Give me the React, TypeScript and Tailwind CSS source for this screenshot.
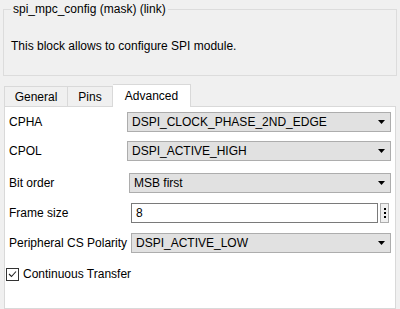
import { ReactNode } from "react";

function ComboArrow() {
    return (
        <svg width="7" height="4" viewBox="0 0 7 4" className="shrink-0">
            <path d="M0 0 H7 L3.5 4 Z" fill="#000" />
        </svg>
    );
}

function Combo({ value, className }: { value: string; className: string }) {
    return (
        <div
            className={`h-[20px] flex items-center justify-between pl-[4px] pr-[5px] bg-[#e1e1e1] border border-[#adadad] ${className}`}
        >
            <span>{value}</span>
            <ComboArrow />
        </div>
    );
}

function Row({ label, children, className }: { label: string; children: ReactNode; className: string }) {
    return (
        <div className={`flex items-center ${className}`}>
            <span className="shrink-0 pl-[4px]">{label}</span>
            {children}
        </div>
    );
}

export default function App() {
    return (
        <div className="w-[400px] h-[309px] bg-[#f0f0f0] overflow-hidden flex flex-col font-['Liberation_Sans',sans-serif] text-[12px] text-black pt-[2px]">
            <fieldset className="mx-[3px] border border-[#dcdcdc] h-[74px] px-[7px] shrink-0">
                <legend className="px-[2px] leading-[14px]">spi_mpc_config (mask) (link)</legend>
                <p className="mt-[23px] leading-[14px]">This block allows to configure SPI module.</p>
            </fieldset>

            <div className="flex items-end ml-[4px] mt-[8px] shrink-0 relative z-10">
                <div className="h-[20px] w-[64px] border border-b-0 border-[#d9d9d9] flex items-center justify-center">
                    General
                </div>
                <div className="h-[20px] w-[45px] border border-l-0 border-b-0 border-[#d9d9d9] flex items-center justify-center">
                    Pins
                </div>
                <div className="h-[23px] w-[78px] -mb-[1px] border border-l-0 border-b-0 border-[#d9d9d9] bg-white flex items-center justify-center pb-[1px]">
                    Advanced
                </div>
            </div>

            <div className="mx-[4px] flex-1 bg-white border border-[#d9d9d9] pt-[5px] flex flex-col">
                <Row label="CPHA">
                    <Combo value="DSPI_CLOCK_PHASE_2ND_EDGE" className="ml-auto w-[264px] mr-[4px]" />
                </Row>
                <Row label="CPOL" className="mt-[9px]">
                    <Combo value="DSPI_ACTIVE_HIGH" className="ml-auto w-[264px] mr-[4px]" />
                </Row>
                <Row label="Bit order" className="mt-[12px]">
                    <Combo value="MSB first" className="ml-auto w-[262px] mr-[4px]" />
                </Row>
                <Row label="Frame size" className="mt-[10px]">
                    <div className="ml-auto h-[20px] w-[247px] border border-[#7a7a7a] bg-white flex items-center pl-[4px]">
                        8
                    </div>
                    <div className="ml-[2px] mr-[6px] h-[20px] w-[9px] border border-[#adadad] bg-[#f0f0f0] flex flex-col items-center justify-center gap-[2px]">
                        <span className="block w-[2px] h-[2px] bg-black" />
                        <span className="block w-[2px] h-[2px] bg-black" />
                        <span className="block w-[2px] h-[2px] bg-black" />
                    </div>
                </Row>
                <Row label="Peripheral CS Polarity" className="mt-[10px]">
                    <Combo value="DSPI_ACTIVE_LOW" className="ml-auto w-[260px] mr-[4px]" />
                </Row>
                <label className="flex items-center mt-[12px] pl-[1px]">
                    <span className="w-[13px] h-[13px] border border-[#333] bg-white flex items-center justify-center">
                        <svg width="9" height="8" viewBox="0 0 9 8">
                            <path d="M1 4 L3.5 6.5 L8 1.5" stroke="#222" strokeWidth="1.1" fill="none" />
                        </svg>
                    </span>
                    <span className="ml-[4px]">Continuous Transfer</span>
                </label>
            </div>
        </div>
    );
}
